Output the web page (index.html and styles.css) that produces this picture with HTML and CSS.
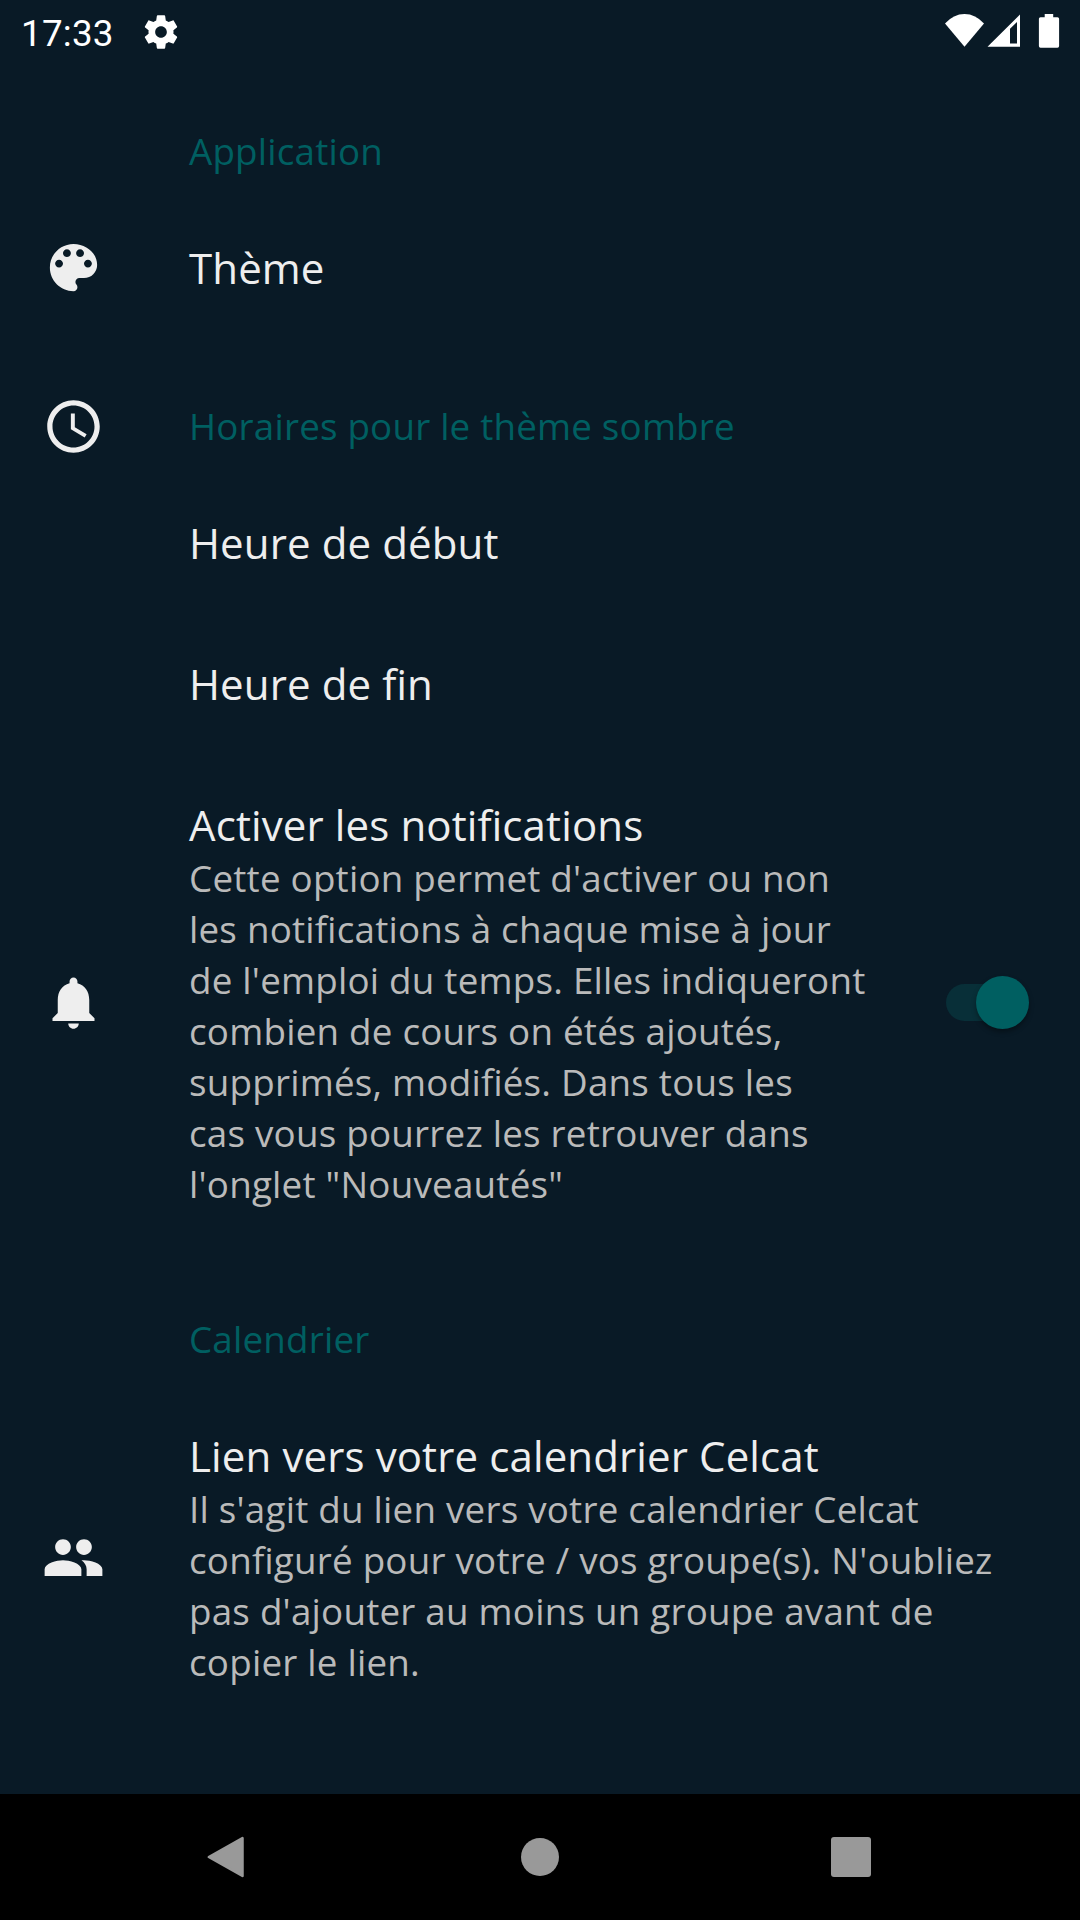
FILE: index.html
```html
<!DOCTYPE html>
<html lang="fr">
<head>
<meta charset="utf-8">
<title>Paramètres</title>
<link rel="stylesheet" href="styles.css">
</head>
<body>
<div class="screen">
  <header class="status-bar">
    <span class="clock">17:33</span>
    <svg class="gear" viewBox="0 0 24 24"><path d="M19.43 12.98c.04-.32.07-.64.07-.98s-.03-.66-.07-.98l2.11-1.65c.19-.15.24-.42.12-.64l-2-3.46c-.12-.22-.39-.3-.61-.22l-2.49 1c-.52-.4-1.08-.73-1.69-.98l-.38-2.65C14.46 2.18 14.25 2 14 2h-4c-.25 0-.46.18-.49.42l-.38 2.65c-.61.25-1.17.59-1.69.98l-2.49-1c-.23-.09-.49 0-.61.22l-2 3.46c-.13.22-.07.49.12.64l2.11 1.65c-.04.32-.07.65-.07.98s.03.66.07.98l-2.11 1.65c-.19.15-.24.42-.12.64l2 3.46c.12.22.39.3.61.22l2.49-1c.52.4 1.08.73 1.69.98l.38 2.65c.03.24.24.42.49.42h4c.25 0 .46-.18.49-.42l.38-2.65c.61-.25 1.17-.59 1.69-.98l2.49 1c.23.09.49 0 .61-.22l2-3.46c.12-.22.07-.49-.12-.64l-2.11-1.65zM12 15.5c-1.93 0-3.5-1.57-3.5-3.5s1.57-3.5 3.5-3.5 3.5 1.57 3.5 3.5-1.57 3.5-3.5 3.5z"/></svg>
    <svg class="indicators" viewBox="0 0 120 63">
      <path d="M5 23.5Q13.5 14 24.500 14T44 23.500L24.500 46.700Z"/>
      <path fill-rule="evenodd" d="M47.500 46.700L80 14.500V46.700ZM70 28.800V43.500H77V22Z"/>
      <path d="M104.700 14h8.500v3.200h4.300q1.600 0 1.600 1.600v27.300q0 1.600-1.600 1.600h-17q-1.600 0-1.600-1.600V18.800q0-1.600 1.600-1.600h4.200z"/>
    </svg>
  </header>

  <main class="settings">
    <h2 class="category"><span class="icon"></span><span>Application</span></h2>
    <div class="row">
      <svg class="icon" viewBox="0 0 24 24"><path d="M12 3c-4.970 0-9 4.030-9 9s4.030 9 9 9c.83 0 1.500-.67 1.500-1.500 0-.39-.15-.74-.39-1.010-.23-.26-.38-.61-.38-.99 0-.83.67-1.500 1.500-1.500H16c2.760 0 5-2.240 5-5 0-4.420-4.030-8-9-8zm-5.500 9c-.83 0-1.500-.67-1.500-1.500S5.670 9 6.500 9 8 9.670 8 10.500 7.330 12 6.500 12zm3-4C8.670 8 8 7.330 8 6.500S8.670 5 9.500 5s1.500.67 1.500 1.500S10.330 8 9.500 8zm5 0c-.83 0-1.500-.67-1.500-1.500S13.670 5 14.500 5s1.500.67 1.500 1.500S15.330 8 14.500 8zm3 4c-.83 0-1.500-.67-1.500-1.500S16.670 9 17.500 9s1.500.67 1.500 1.500-.67 1.500-1.500 1.500z"/></svg>
      <div class="text"><div class="title">Thème</div></div>
    </div>
    <h2 class="category">
      <svg class="icon" viewBox="0 0 24 24"><path d="M11.990 2C6.470 2 2 6.480 2 12s4.470 10 9.990 10C17.520 22 22 17.520 22 12S17.520 2 11.990 2zM12 20c-4.420 0-8-3.580-8-8s3.580-8 8-8 8 3.580 8 8-3.580 8-8 8z"/><path d="M12.500 7H11v6l5.250 3.150.75-1.230-4.500-2.670z"/></svg>
      <span>Horaires pour le thème sombre</span>
    </h2>
    <div class="row"><span class="icon"></span><div class="text"><div class="title">Heure de début</div></div></div>
    <div class="row"><span class="icon"></span><div class="text"><div class="title">Heure de fin</div></div></div>
    <div class="row">
      <svg class="icon" viewBox="0 0 24 24"><path d="M12 22c1.100 0 2-.9 2-2h-4c0 1.100.89 2 2 2zm6-6v-5c0-3.070-1.640-5.640-4.500-6.320V4c0-.83-.67-1.500-1.500-1.500s-1.500.67-1.500 1.500v.68C7.630 5.360 6 7.920 6 11v5l-2 2v1h16v-1l-2-2z"/></svg>
      <div class="text">
        <div class="title">Activer les notifications</div>
        <p class="summary">Cette option permet d'activer ou non les notifications à chaque mise à jour de l'emploi du temps. Elles indiqueront combien de cours on étés ajoutés, supprimés, modifiés. Dans tous les<br>cas vous pourrez les retrouver dans l'onglet "Nouveautés"</p>
      </div>
      <div class="switch"><div class="thumb"></div></div>
    </div>
    <h2 class="category"><span class="icon"></span><span>Calendrier</span></h2>
    <div class="row">
      <svg class="icon" viewBox="0 0 24 24"><path d="M16 11c1.660 0 2.990-1.340 2.990-3S17.660 5 16 5s-3 1.340-3 3 1.340 3 3 3zm-8 0c1.660 0 2.990-1.340 2.990-3S9.660 5 8 5 5 6.340 5 8s1.340 3 3 3zm0 2c-2.330 0-7 1.170-7 3.500V19h14v-2.500c0-2.330-4.670-3.500-7-3.500zm8 0c-.29 0-.62.02-.97.05 1.160.84 1.970 1.970 1.970 3.450V19h6v-2.500c0-2.330-4.670-3.500-7-3.500z"/></svg>
      <div class="text">
        <div class="title">Lien vers votre calendrier Celcat</div>
        <p class="summary">Il s'agit du lien vers votre calendrier Celcat configuré pour votre / vos groupe(s). N'oubliez pas d'ajouter au moins un groupe avant de copier le lien.</p>
      </div>
    </div>
  </main>

  <nav class="nav-bar">
    <svg viewBox="0 0 48 48"><path d="M38.500 5v38L4.800 24Z" stroke-width="2.500" stroke-linejoin="round"/></svg>
    <svg viewBox="0 0 48 48"><circle cx="24" cy="24" r="19"/></svg>
    <svg viewBox="0 0 48 48"><rect x="3" y="4" width="40" height="40" rx="3"/></svg>
  </nav>
</div>
</body>
</html>
```
FILE: styles.css
```css
* {
  box-sizing: border-box;
}

body {
  margin: 0;
  background: #091a26;
  font-family: "Open Sans", sans-serif;
  font-feature-settings: "liga" 1;
}

.screen {
  display: flex;
  flex-direction: column;
  width: 1080px;
  height: 1920px;
  overflow: hidden;
}

.status-bar {
  display: flex;
  align-items: center;
  height: 63px;
  padding-left: 21px;
  color: #fff;
  fill: #fff;
}

.clock {
  width: 120px;
  font: 36.75px/63px Roboto, sans-serif;
  letter-spacing: 0.25px;
  padding-top: 4px;
}

.gear {
  width: 40px;
  height: 40px;
}

.indicators {
  width: 120px;
  height: 63px;
  margin-left: auto;
  margin-right: 20px;
}

.settings {
  flex: 1;
}

.category,
.row {
  display: flex;
  align-items: center;
  padding-left: 42px;
  padding-right: 42px;
}

.category {
  height: 92px;
  margin: 42px 0 0;
  color: #005f61;
  font-size: 36.75px;
  font-weight: 400;
  line-height: 52px;
  letter-spacing: 0.2px;
}

.row {
  padding-top: 42px;
  padding-bottom: 42px;
}

.icon {
  flex: none;
  width: 63px;
  height: 63px;
  margin: -3px 84px -3px 0;
  fill: #eee;
}

.text {
  flex: 1;
}

.title {
  color: #eee;
  font-size: 42px;
  line-height: 57px;
  letter-spacing: 0.12px;
}

.summary {
  margin: 0 0 -1px;
  color: #bababa;
  font-size: 36.75px;
  line-height: 51px;
  letter-spacing: 0.23px;
}

.switch {
  display: flex;
  justify-content: flex-end;
  align-items: center;
  width: 74px;
  height: 37px;
  margin-left: 71px;
  margin-right: 18px;
  border-radius: 19px;
  background: #082f38;
}

.thumb {
  flex: none;
  width: 53px;
  height: 53px;
  margin-right: -9px;
  border-radius: 50%;
  background: #005f61;
  box-shadow: 0 3px 5px rgba(0, 0, 0, 0.35);
}

.nav-bar {
  display: flex;
  justify-content: space-between;
  align-items: center;
  height: 126px;
  padding: 0 204px;
  background: #000;
  fill: #999;
  stroke: #999;
  stroke-width: 0;
}

.nav-bar svg {
  width: 48px;
  height: 48px;
}
```
